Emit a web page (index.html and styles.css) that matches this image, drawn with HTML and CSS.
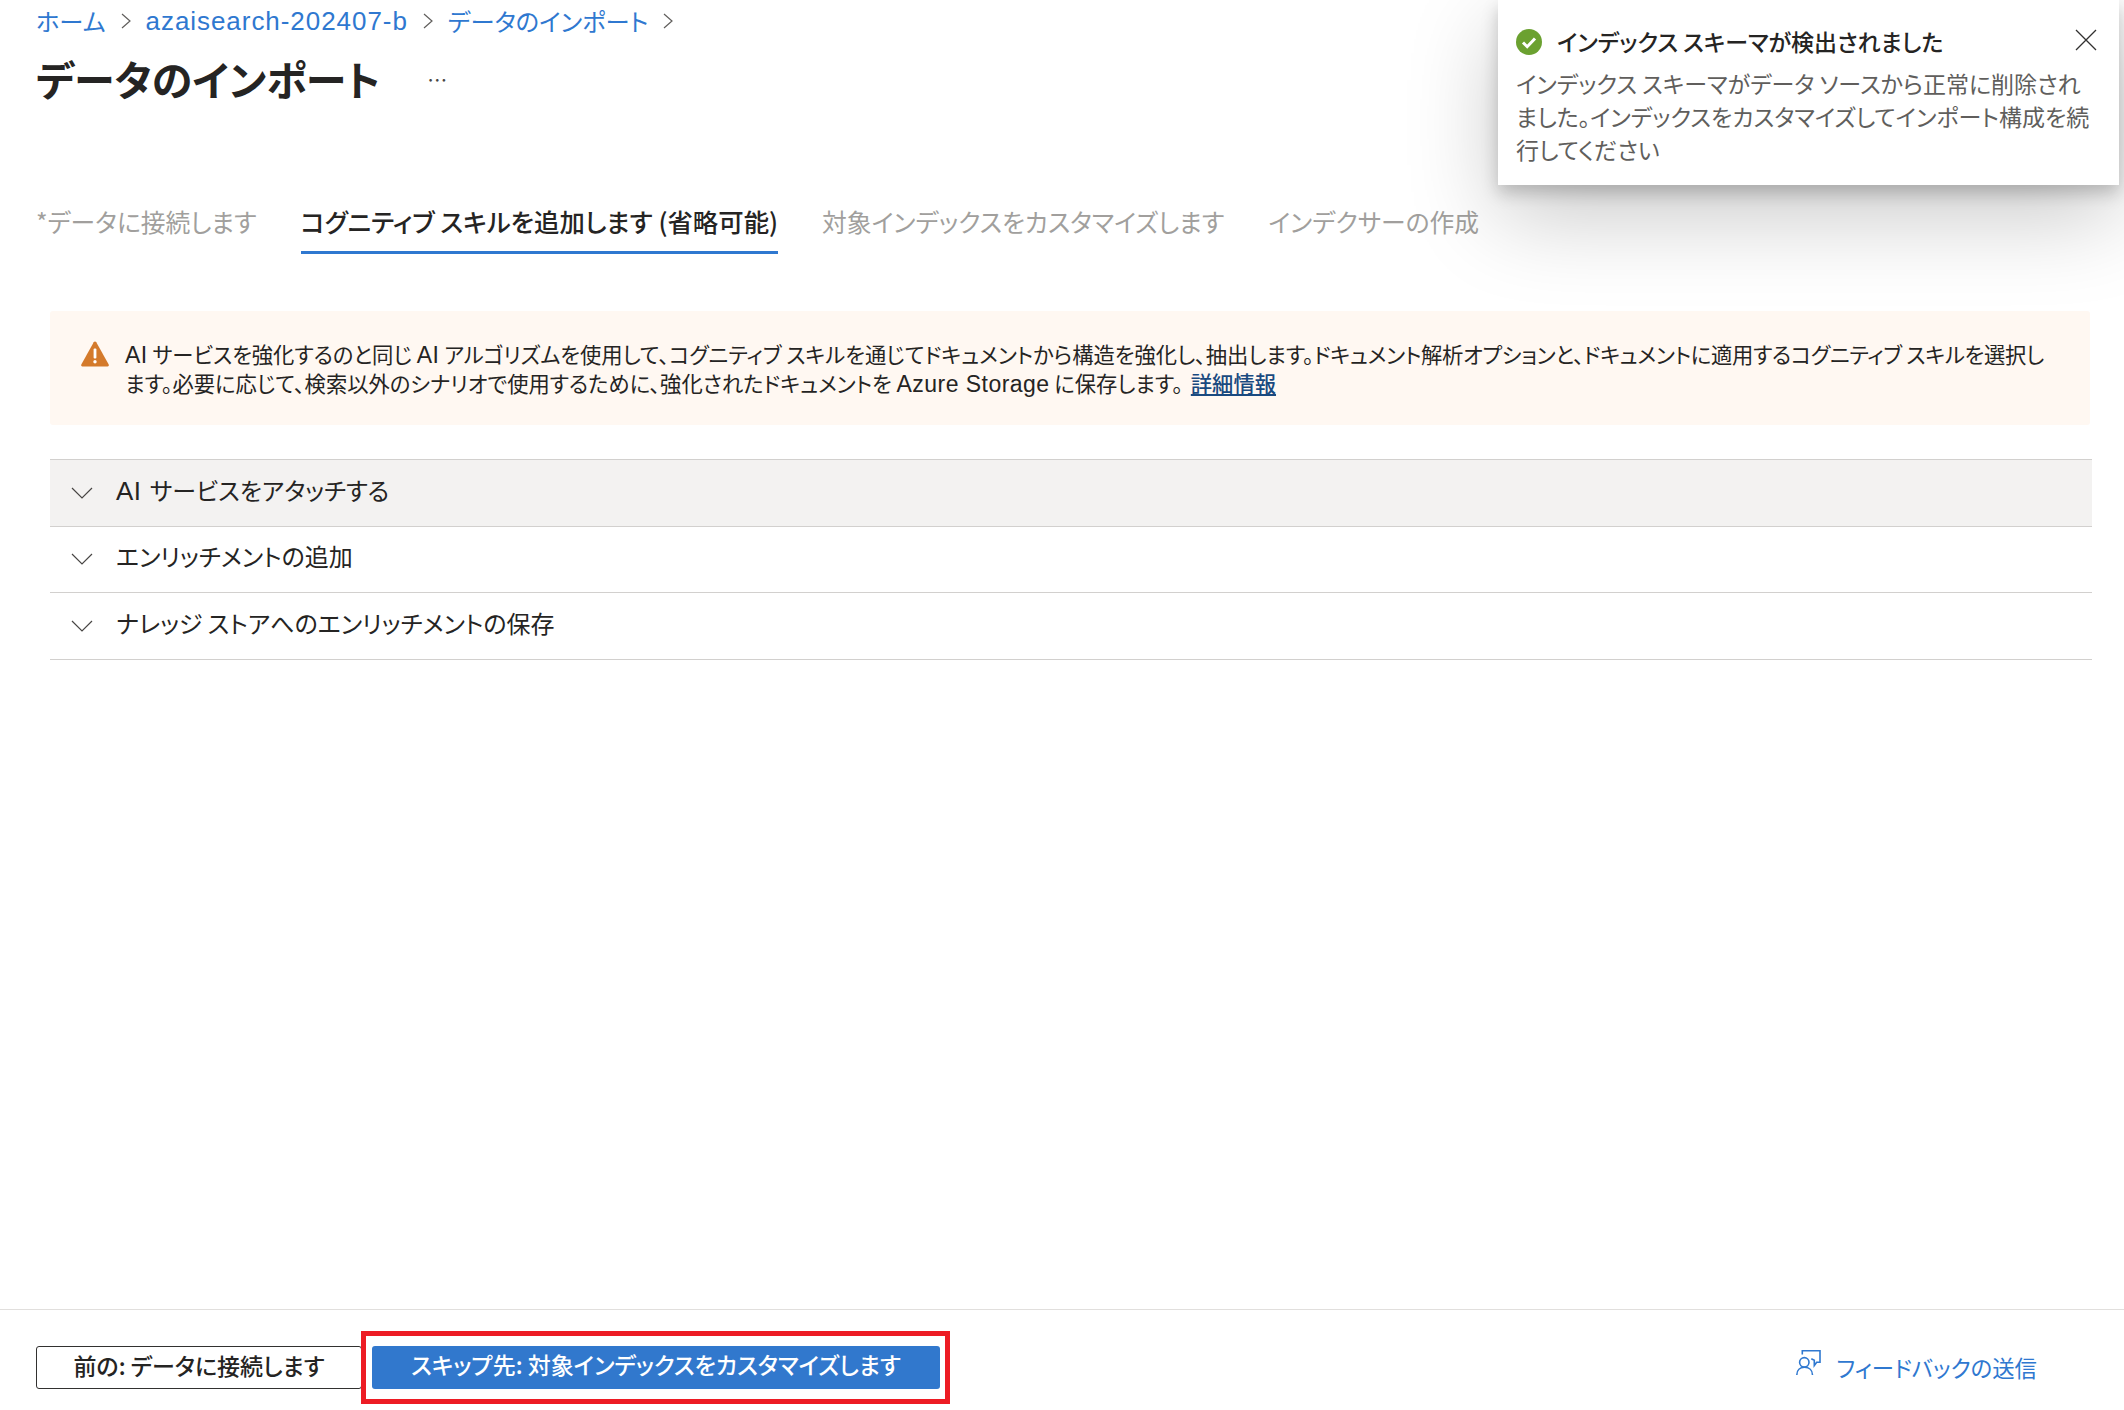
FILE: index.html
```html
<!DOCTYPE html>
<html lang="ja">
<head>
<meta charset="utf-8">
<title>データのインポート</title>
<link rel="stylesheet" href="styles.css">
</head>
<body>
<div class="page">
  <main class="main">
    <nav class="crumbs">
      <a class="crumb">ホーム</a>
      <svg class="crumb-sep" viewBox="0 0 10 16"><path d="M1 1l8 7-8 7"/></svg>
      <a class="crumb crumb-latin">azaisearch-202407-b</a>
      <svg class="crumb-sep" viewBox="0 0 10 16"><path d="M1 1l8 7-8 7"/></svg>
      <a class="crumb">データのインポート</a>
      <svg class="crumb-sep" viewBox="0 0 10 16"><path d="M1 1l8 7-8 7"/></svg>
    </nav>
    <header class="title-row">
      <h1 class="title">データのインポート</h1>
      <span class="more">…</span>
    </header>
    <div class="tabs">
      <div class="tab">*データに接続します</div>
      <div class="tab tab-active">コグニティブ スキルを追加します (省略可能)</div>
      <div class="tab">対象インデックスをカスタマイズします</div>
      <div class="tab">インデクサーの作成</div>
    </div>
    <section class="content">
      <div class="banner">
        <svg class="warn" viewBox="0 0 30 27"><path d="M15 1.5c.6 0 1 .3 1.3.8l12.4 22.3c.5.9-.1 1.9-1.1 1.9H2.4c-1 0-1.6-1-1.1-1.9L13.700 2.300c.3-.5.7-.8 1.300-.8z" fill="#d47a2b"/><rect x="13.600" y="8.500" width="2.800" height="10" rx="1" fill="#fff"/><circle cx="15" cy="21.800" r="1.700" fill="#fff"/></svg>
        <p class="banner-text"><span class="lat">AI</span> サービスを強化するのと同じ <span class="lat">AI</span> アルゴリズムを使用して、コグニティブ スキルを通じてドキュメントから構造を強化し、抽出します。<span class="tight">ドキュメント解析オプションと、ドキュメントに適用するコグニティブ スキルを選択し</span>ます。必要に応じて、検索以外のシナリオで使用するために、強化されたドキュメントを <span class="lat">Azure Storage</span> に保存します。<a class="banner-link">詳細情報</a></p>
      </div>
      <div class="accordion">
        <div class="acc-row acc-row-hover">
          <svg class="chev" viewBox="0 0 22 12"><path d="M1 1l10 10L21 1"/></svg>
          <span class="acc-label"><span class="lat">AI</span> サービスをアタッチする</span>
        </div>
        <div class="acc-row">
          <svg class="chev" viewBox="0 0 22 12"><path d="M1 1l10 10L21 1"/></svg>
          <span class="acc-label">エンリッチメントの追加</span>
        </div>
        <div class="acc-row">
          <svg class="chev" viewBox="0 0 22 12"><path d="M1 1l10 10L21 1"/></svg>
          <span class="acc-label">ナレッジ ストアへのエンリッチメントの保存</span>
        </div>
      </div>
    </section>
  </main>
  <footer class="footer">
    <button class="btn btn-prev">前の: データに接続します</button>
    <div class="highlight">
      <button class="btn btn-next">スキップ先: 対象インデックスをカスタマイズします</button>
    </div>
    <a class="feedback">
      <svg class="feedback-icon" viewBox="0 0 25 25"><path d="M6.300 4.500V.8H24v11.500h-3.300l-2.400 3.200v-5.200l-3-1.500"/><circle cx="8.300" cy="12.300" r="4.700"/><path d="M.8 25c0-5 3.200-7.700 7.700-7.700s8 2.700 8 7.700"/></svg>
      <span>フィードバックの送信</span>
    </a>
  </footer>
</div>
<aside class="toast">
  <div class="toast-head">
    <svg class="toast-check" viewBox="0 0 26 26"><circle cx="13" cy="13" r="13" fill="#6ba130"/><path d="M7 13.500l4.200 4.200L19 9.500" fill="none" stroke="#fff" stroke-width="3"/></svg>
    <span class="toast-title">インデックス スキーマが検出されました</span>
    <svg class="toast-close" viewBox="0 0 22 22"><path d="M1 1l20 20M21 1L1 21"/></svg>
  </div>
  <p class="toast-body">インデックス スキーマがデータ ソースから正常に削除されました。インデックスをカスタマイズしてインポート構成を続行してください</p>
</aside>
</body>
</html>
```

FILE: styles.css
```css
* { box-sizing: border-box; }
html, body { margin: 0; height: 100%; background: #fff; overflow: hidden; }
body {
  font-family: "Noto Sans CJK JP", "Noto Sans", sans-serif;
  font-feature-settings: "palt";
  color: #252423;
}
.lat { font-family: "Liberation Sans", sans-serif; font-size: 1.08em; letter-spacing: .02em; }
.tight { letter-spacing: -.25px; }
.page { display: flex; flex-direction: column; height: 1410px; }
.main { flex: 1; padding: 0 32px 0 36px; }
.crumbs { display: flex; align-items: center; gap: 15px; height: 42px; font-size: 24.300px; color: #2f78d0; }
.crumb { line-height: 42px; }
.crumb-latin { font-family: "Liberation Sans", sans-serif; font-size: 26px; letter-spacing: .95px; }
.crumb-sep { width: 10px; height: 16px; fill: none; stroke: #605e5c; stroke-width: 1.200; }
.title-row { display: flex; align-items: center; height: 74px; padding-bottom: 2px; }
.title { margin: 0; font-size: 41px; font-weight: 700; line-height: 72px; color: #252423; }
.more { margin: 3px 0 0 47px; font-size: 20px; color: #484644; }
.tabs { display: flex; gap: 44px; margin-top: 82px; height: 56px; font-size: 24.800px; color: #a19f9d; }
.tab { height: 56px; line-height: 46px; white-space: nowrap; }
.tab-active { color: #252423; font-size: 25.400px; font-weight: 500; border-bottom: 3px solid #2f78d0; }
.content { margin: 57px 0 0 14px; }
.banner { display: flex; gap: 15px; height: 114px; padding: 29px 36px 0 30px; margin-right: 2px; background: #fff8f2; border-radius: 3px; }
.warn { width: 30px; height: 27px; flex: none; }
.banner-text { margin: 0; font-size: 21.300px; line-height: 28px; color: #252423; }
.banner-link { margin-left: 8px; color: #1a4a80; text-decoration: underline; font-weight: 500; }
.accordion { margin-top: 34px; border-top: 1px solid #d2d0ce; }
.acc-row { display: flex; align-items: center; gap: 23px; height: 66.500px; padding-left: 21px; font-size: 24px; border-bottom: 1.500px solid #d2d0ce; color: #252423; }
.acc-row .lat { margin-right: 3px; }
.acc-label { padding-bottom: 7px; }
.acc-row-hover { background: #f3f2f1; }
.chev { width: 22px; height: 12px; flex: none; fill: none; stroke: #484644; stroke-width: 1.200; }
.footer { display: flex; align-items: center; height: 101px; padding: 14px 87px 0 36px; border-top: 1.500px solid #e1dfdd; }
.btn { height: 43px; padding: 0 0 7px; font: inherit; font-size: 23px; font-weight: 500; border-radius: 3px; line-height: 36px; white-space: nowrap; }
.btn-prev { width: 326px; background: #fff; border: 1.500px solid #323130; color: #252423; flex: none; }
.highlight { width: 589px; height: 73px; margin: 0 0 0 -1px; flex: none; padding: 10px 6px; border: 5px solid #ed1c24; }
.btn-next { width: 568px; background: #3178cd; border: 0; color: #fff; }
.feedback { margin-left: auto; display: flex; align-items: flex-start; gap: 15px; font-size: 22.400px; color: #2f78d0; line-height: 30px; }
.feedback-icon { width: 25px; height: 25px; margin-top: -2px; fill: none; stroke: #2f78d0; stroke-width: 1.600; }
.toast { position: absolute; top: 0; left: 1498px; width: 621px; height: 185px; padding: 26px 19px 0 18px; background: #fff; box-shadow: 0 8px 16px rgba(0,0,0,.2), 0 30px 90px rgba(0,0,0,.22); }
.toast-head { display: flex; align-items: center; height: 29px; gap: 15px; }
.toast-check { width: 26px; height: 26px; flex: none; margin-top: 3px; }
.toast-title { font-size: 23px; font-weight: 500; color: #252423; white-space: nowrap; }
.toast-close { width: 22px; height: 22px; margin-left: auto; margin-right: 3px; margin-top: -2px; fill: none; stroke: #323130; stroke-width: 1.300; }
.toast-body { margin: 12px 0 0; font-size: 23px; line-height: 33px; color: #605e5c; }
```
